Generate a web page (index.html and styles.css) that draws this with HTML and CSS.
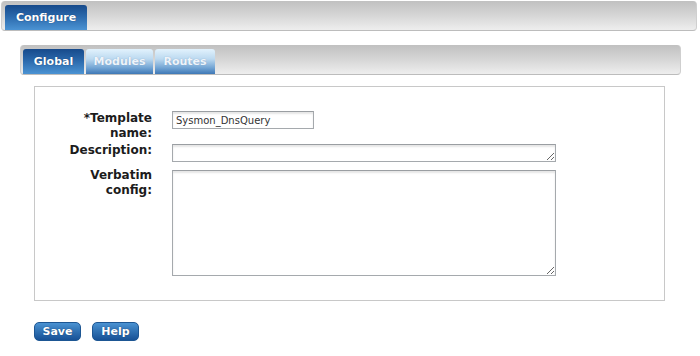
FILE: index.html
```html
<!DOCTYPE html>
<html>
<head>
<meta charset="utf-8">
<link rel="stylesheet" href="styles.css">
</head>
<body>
<div class="page">
  <div class="topbar">
    <div class="tab tab-active tab-configure">Configure</div>
  </div>
  <div class="subbar">
    <div class="tab tab-active tab-global">Global</div>
    <div class="tab tab-inactive tab-modules">Modules</div>
    <div class="tab tab-inactive tab-routes">Routes</div>
  </div>
  <div class="panel">
    <div class="row row-name">
      <label class="label">*Template<br>name:</label>
      <textarea class="field field-name" rows="1">Sysmon_DnsQuery</textarea>
    </div>
    <div class="row row-desc">
      <label class="label">Description:</label>
      <textarea class="field area-desc"></textarea>
    </div>
    <div class="row row-verb">
      <label class="label">Verbatim<br>config:</label>
      <textarea class="field area-verb"></textarea>
    </div>
  </div>
  <div class="actions">
    <button class="btn">Save</button>
    <button class="btn">Help</button>
  </div>
</div>
</body>
</html>
```
FILE: styles.css
```css
html, body {
  margin: 0;
  padding: 0;
  background: #ffffff;
  font-family: "DejaVu Sans", Verdana, sans-serif;
}
.page {
  padding: 1px 3px 0 1px;
}
.topbar {
  height: 30px;
  box-sizing: border-box;
  padding: 4px 0 0 3px;
  display: flex;
  align-items: flex-end;
  background: linear-gradient(#c0c0c0, #d6d6d6 50%, #eeeeee);
  border-bottom: 1px solid #bcbcbc;
  border-right: 1px solid #cfcfcf;
  border-left: 1px solid #cfcfcf;
  border-radius: 4px;
}
.subbar {
  margin: 14px 0 0 19px;
  width: 661px;
  height: 30px;
  box-sizing: border-box;
  padding: 4px 0 0 2px;
  display: flex;
  gap: 2px;
  align-items: flex-end;
  background: linear-gradient(#c0c0c0, #d6d6d6 50%, #eeeeee);
  border-bottom: 1px solid #bcbcbc;
  border-right: 1px solid #cfcfcf;
  border-left: 1px solid #cfcfcf;
  border-radius: 4px;
}
.tab {
  height: 25px;
  display: flex;
  align-items: center;
  justify-content: center;
  font-size: 11px;
  font-weight: bold;
  border-radius: 3px 3px 0 0;
  box-sizing: border-box;
}
.tab-active {
  color: #ffffff;
  background: linear-gradient(#174a8b, #2a68ab 45%, #4b93d3);
  text-shadow: 0 0 1px #0c3060;
}
.tab-inactive {
  color: #eef4fa;
  background: linear-gradient(#e2f2fd, #bcd9f0 40%, #73a5d4 75%, #3f78b6);
  text-shadow: 0 0 1px #7a9cc2;
}
.tab-configure { width: 82px; }
.tab-global { width: 61px; }
.tab-modules { width: 67px; }
.tab-routes { width: 60px; }
.panel {
  margin: 11px 0 0 33px;
  width: 631px;
  height: 215px;
  box-sizing: border-box;
  border: 1px solid #c8c8c8;
  padding-top: 24px;
}
.row {
  display: flex;
  align-items: flex-start;
}
.row-desc { margin-top: 2px; }
.row-verb { margin-top: 6px; }
.label {
  width: 117px;
  margin-right: 20px;
  text-align: right;
  font-size: 12px;
  line-height: 15px;
  font-weight: bold;
  color: #1c1c1c;
}
.field {
  box-sizing: border-box;
  border: 1px solid #a5a9ad;
  border-top-color: #9a9ea2;
  box-shadow: inset 0 2px 2px #e6e6e6;
  font-family: "DejaVu Sans", Verdana, sans-serif;
  font-size: 10px;
  color: #333333;
  margin: 0;
  padding: 1px 3px;
  background: #ffffff;
}
.field-name {
  width: 142px;
  height: 18px;
  padding: 2px 3px 0;
  line-height: 14px;
  resize: none;
  overflow: hidden;
  white-space: nowrap;
}
.area-desc {
  width: 384px;
  height: 18px;
  margin-top: 1px;
}
.area-verb {
  width: 384px;
  height: 106px;
  margin-top: 2px;
}
.actions {
  display: flex;
  gap: 11px;
  margin: 21px 0 0 33px;
}
.btn {
  width: 47px;
  height: 19px;
  padding: 0;
  border: 1px solid #1d5693;
  border-radius: 5px;
  background: linear-gradient(#4a92d2, #2f70b2 50%, #175196);
  color: #ffffff;
  font-family: "DejaVu Sans", Verdana, sans-serif;
  font-size: 11px;
  font-weight: bold;
  text-shadow: 0 0 1px #0c3060;
  box-sizing: border-box;
}
```
